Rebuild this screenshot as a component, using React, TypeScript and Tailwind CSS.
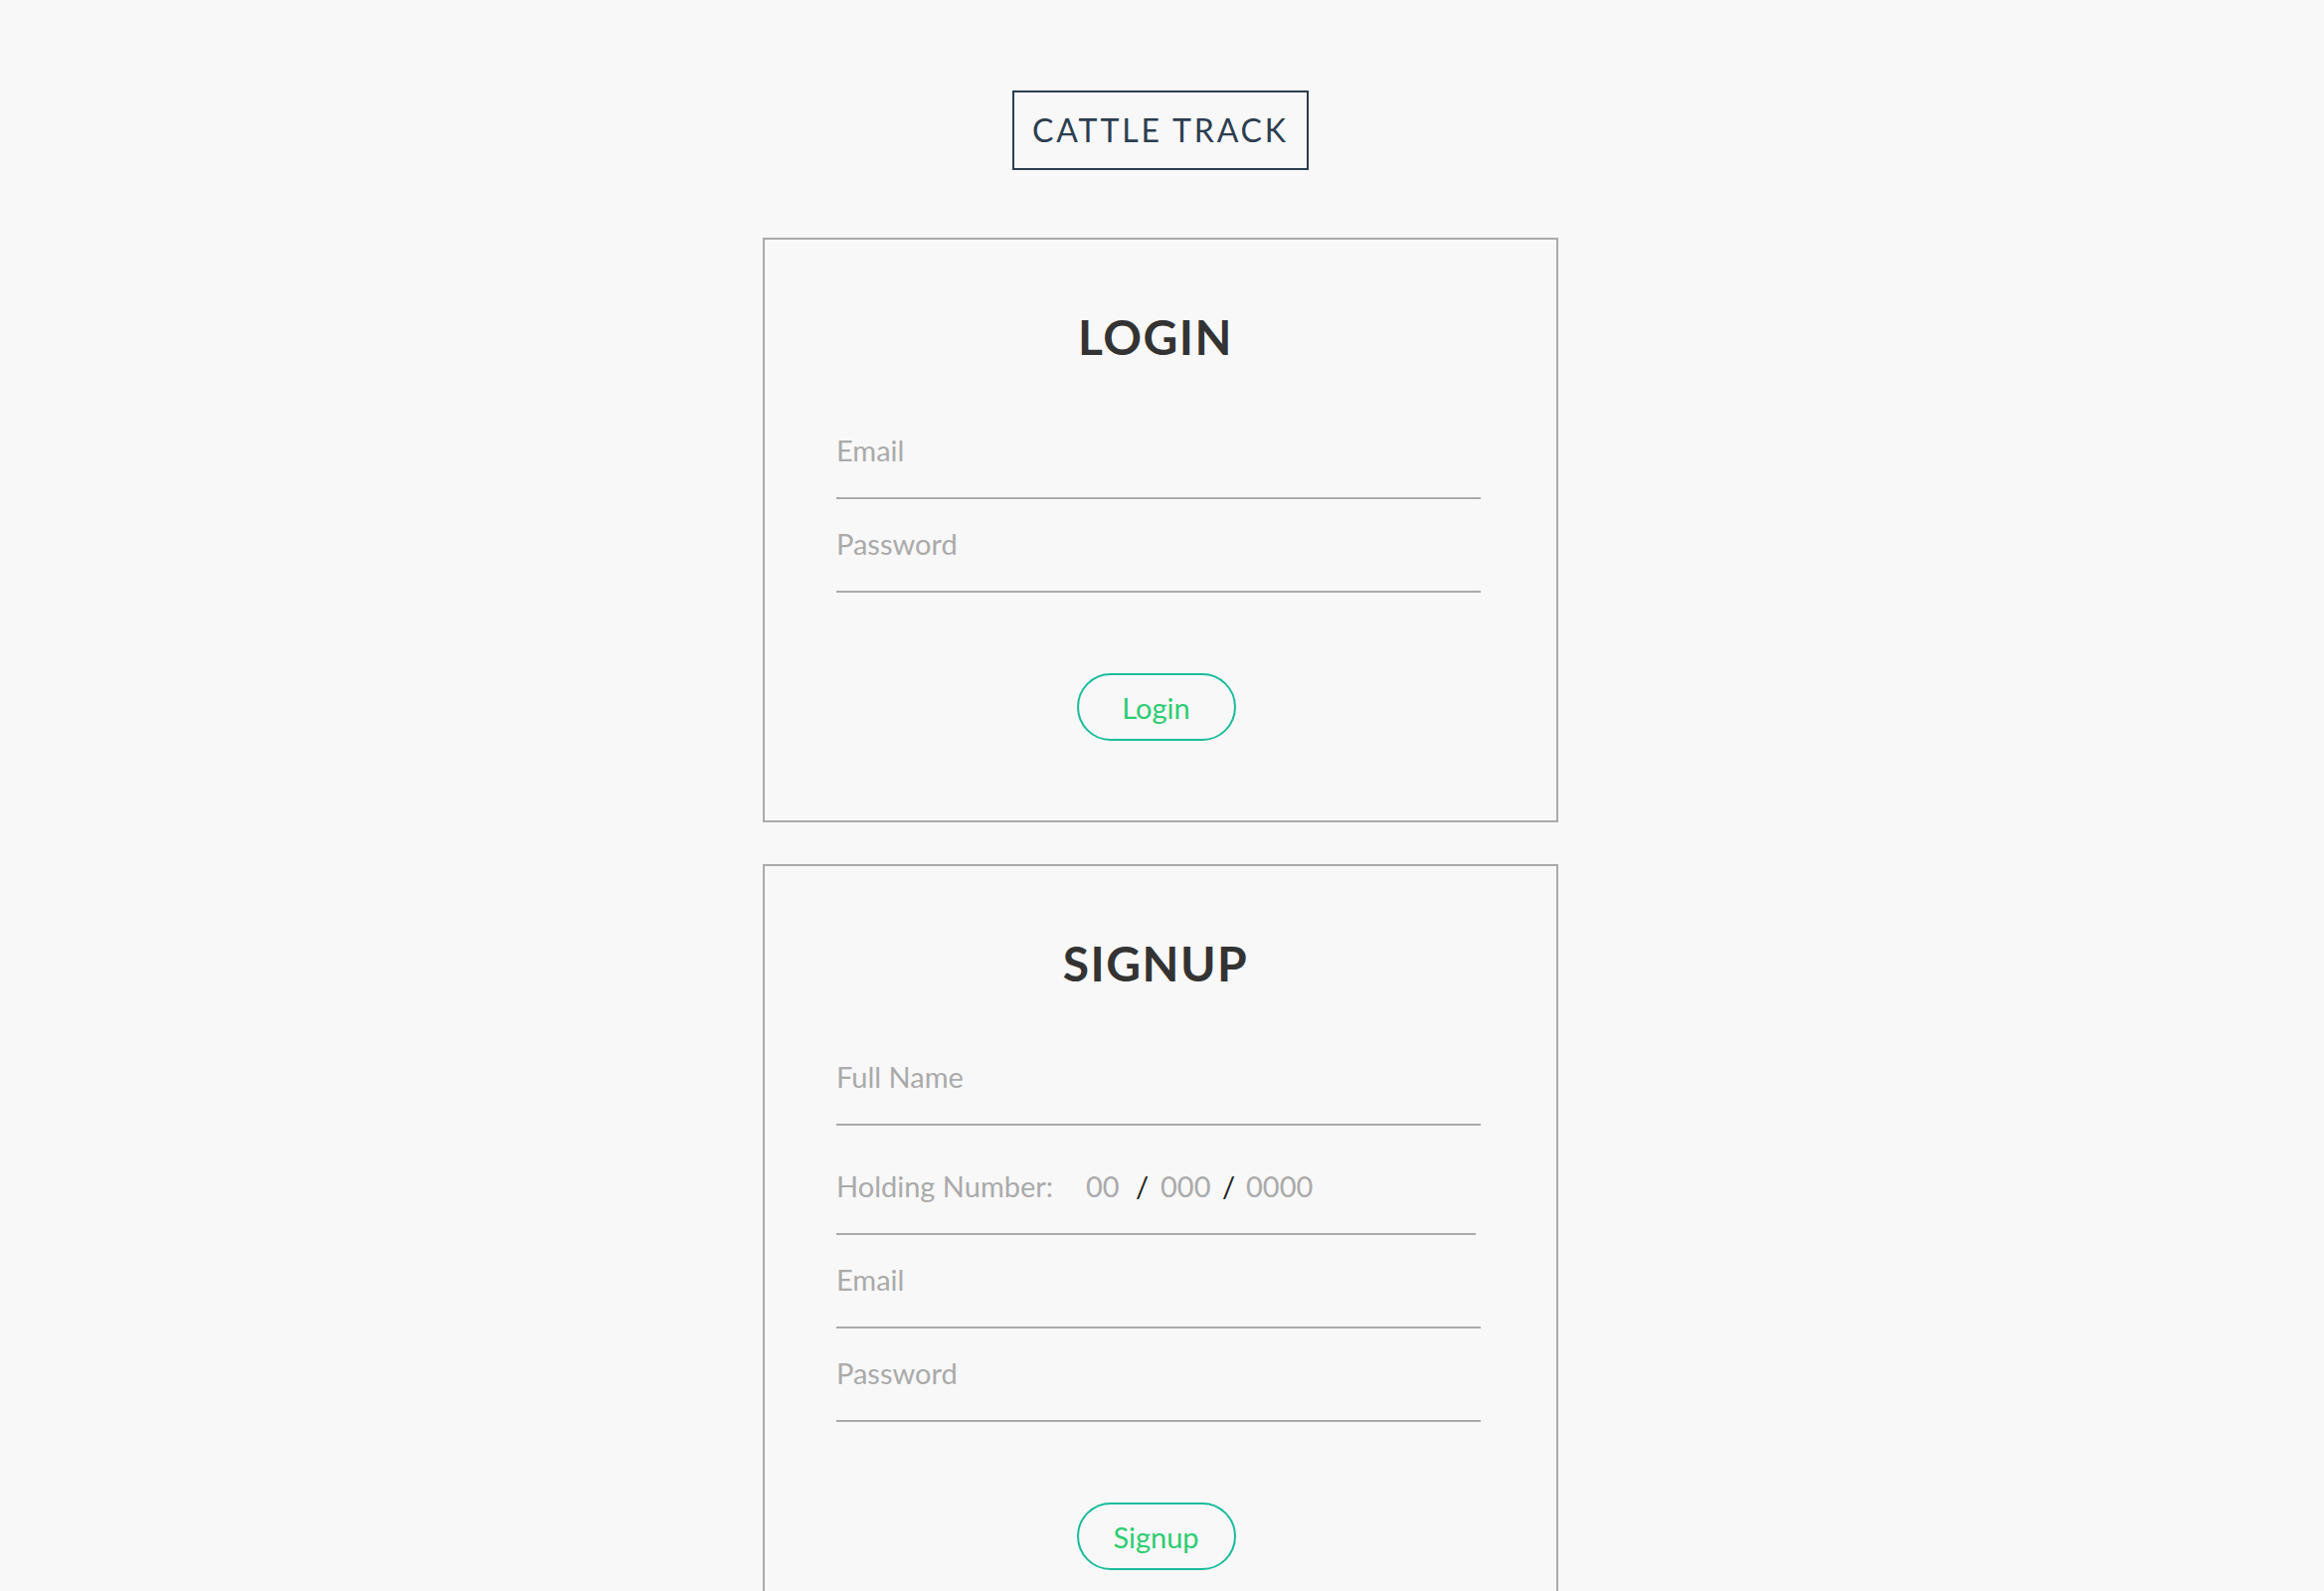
import React from 'react';

const Field: React.FC<{ placeholder: string; type?: string }> = ({ placeholder, type = 'text' }) => (
	<input
		type={type}
		placeholder={placeholder}
		className="block w-[648px] h-[94px] box-border pt-[30px] pb-[33px] leading-[29px] text-[29px] bg-transparent border-b-2 border-[#aaa] text-[#555] placeholder:text-[#aaa] outline-none"
	/>
);

const Button: React.FC<{ label: string }> = ({ label }) => (
	<button className="mt-[81px] self-center mr-[5px] flex items-center justify-center w-[160px] h-[68px] rounded-full border-2 border-[#1abc9c] text-[#2ecc71] text-[29px] leading-[29px] bg-transparent cursor-pointer">
		{label}
	</button>
);

const Heading: React.FC<{ children: React.ReactNode }> = ({ children }) => (
	<h2 className="self-center mr-[6px] text-[48px] leading-[48px] font-bold tracking-[0.03em] text-[#333] mb-[45px]">
		{children}
	</h2>
);

const App: React.FC = () => {
	return (
		<div className="min-h-screen bg-[#f8f8f8] font-['Lato',sans-serif] flex flex-col items-center pt-[91px] pb-[120px] pr-[3px]">
			{/* logo */}
			<div className="border-2 border-[#2c3e50] px-[18px] py-[22px] text-[32px] leading-[32px] tracking-[0.09em] text-[#2c3e50]">
				CATTLE TRACK
			</div>

			{/* login */}
			<div className="mt-[68px] w-[800px] border-2 border-[#aaa] pt-[74px] pb-[80px] pl-[72px] pr-[76px] flex flex-col">
				<Heading>LOGIN</Heading>
				<Field placeholder="Email" type="email" />
				<Field placeholder="Password" type="password" />
				<Button label="Login" />
			</div>

			{/* signup */}
			<div className="mt-[42px] w-[800px] border-2 border-[#aaa] pt-[74px] pb-[80px] pl-[72px] pr-[76px] flex flex-col">
				<Heading>SIGNUP</Heading>
				<Field placeholder="Full Name" />
				<div className="w-[643px] h-[110px] box-border pt-[46px] pb-[33px] border-b-2 border-[#aaa] flex items-center text-[29px] leading-[29px]">
					<span className="w-[251px] text-[#aaa]">Holding Number:</span>
					<input placeholder="00" className="w-[50px] bg-transparent outline-none placeholder:text-[#aaa] text-[#555]" />
					<span className="w-[25px] text-[#222]">/</span>
					<input placeholder="000" className="w-[62px] bg-transparent outline-none placeholder:text-[#aaa] text-[#555]" />
					<span className="w-[24px] text-[#222]">/</span>
					<input placeholder="0000" className="w-[80px] bg-transparent outline-none placeholder:text-[#aaa] text-[#555]" />
				</div>
				<Field placeholder="Email" type="email" />
				<Field placeholder="Password" type="password" />
				<Button label="Signup" />
			</div>
		</div>
	);
};

export default App;
